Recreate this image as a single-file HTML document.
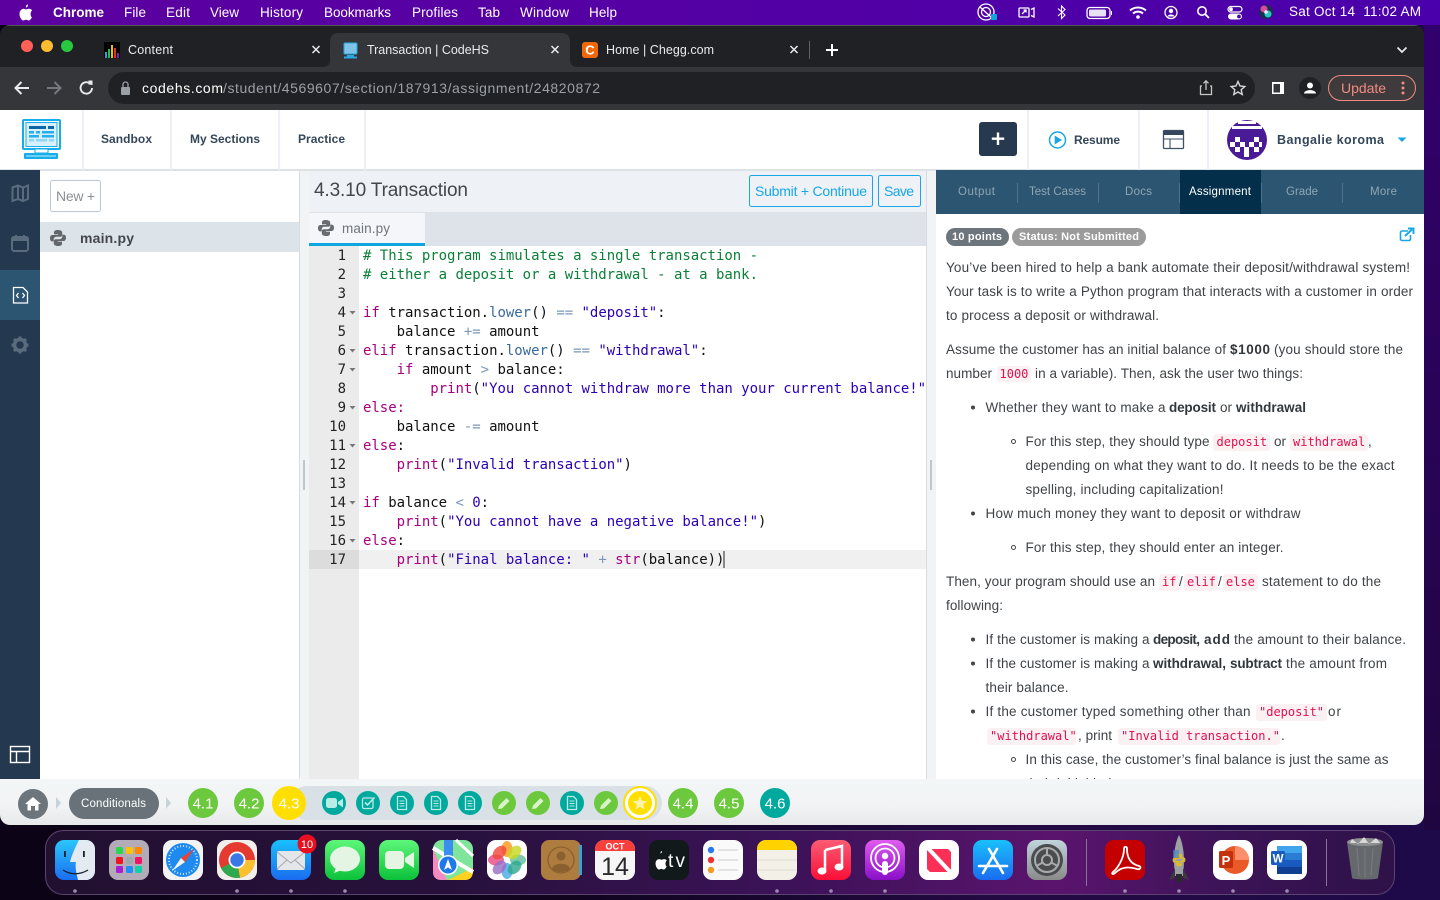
<!DOCTYPE html>
<html><head><meta charset="utf-8"><title>Transaction | CodeHS</title>
<style>
html,body{margin:0;padding:0;width:1440px;height:900px;overflow:hidden;background:#1a0535}
svg{display:block}
text{font-family:"Liberation Sans",sans-serif;white-space:pre}
.m{font-size:13.5px;fill:#fff}
.t{font-size:12.5px;fill:#e8eaed}
.n{font-size:12px;font-weight:700;fill:#34465a}
.p{font-size:13.5px;fill:#3f4347}
.pb{font-size:13.5px;fill:#33373b;font-weight:700}
.c{font-family:"DejaVu Sans Mono","Liberation Mono",monospace;font-size:12px;fill:#e0104f}
.co{font-family:"DejaVu Sans Mono","Liberation Mono",monospace;font-size:14px;fill:#111;letter-spacing:-.025px}
.ln{font-family:"DejaVu Sans Mono","Liberation Mono",monospace;font-size:14px;fill:#222;text-anchor:end}
.k{fill:#a8007f}.g{fill:#0b7f38}.s{fill:#2b00b5}.f{fill:#3a6a9c}.o{fill:#7d98b3}
.rt{font-size:11.5px;fill:#8fa6b5}
.sec{font-size:15px;fill:#fff;text-anchor:middle;font-weight:400}
.bx{fill:#fbf1f3}
</style></head><body>
<svg width="1440" height="900" viewBox="0 0 1440 900" xmlns="http://www.w3.org/2000/svg">
<defs>
<linearGradient id="menu" x1="0" x2="1" y1="0" y2="0"><stop offset="0" stop-color="#5c00a0"/><stop offset="1" stop-color="#4a00aa"/></linearGradient>
<linearGradient id="side" x1="0" x2="0" y1="0" y2="1"><stop offset="0" stop-color="#33006e"/><stop offset="1" stop-color="#200640"/></linearGradient>
<linearGradient id="wall" x1="0" x2="1" y1="0" y2="0"><stop offset="0" stop-color="#0c0316"/><stop offset=".4" stop-color="#10041f"/><stop offset=".7" stop-color="#240a44"/><stop offset="1" stop-color="#1e0a48"/></linearGradient>
<linearGradient id="dock" x1="0" x2="1" y1="0" y2="0"><stop offset="0" stop-color="#221030"/><stop offset=".3" stop-color="#27113c"/><stop offset=".55" stop-color="#3c1258"/><stop offset=".75" stop-color="#5a146e"/><stop offset=".88" stop-color="#3b1356"/><stop offset="1" stop-color="#2e1248"/></linearGradient>
<linearGradient id="bar" x1="0" x2="0" y1="0" y2="1"><stop offset="0" stop-color="#f3f6f7"/><stop offset=".6" stop-color="#f1f3f4"/><stop offset="1" stop-color="#e6e8e9"/></linearGradient>
<linearGradient id="finder" x1="0" x2="0" y1="0" y2="1"><stop offset="0" stop-color="#2cc6fb"/><stop offset="1" stop-color="#1a6ef0"/></linearGradient>
<linearGradient id="blue" x1="0" x2="0" y1="0" y2="1"><stop offset="0" stop-color="#19c0fb"/><stop offset="1" stop-color="#1a6cf0"/></linearGradient>
<linearGradient id="green" x1="0" x2="0" y1="0" y2="1"><stop offset="0" stop-color="#5df77a"/><stop offset="1" stop-color="#0cc13a"/></linearGradient>
<linearGradient id="red" x1="0" x2="0" y1="0" y2="1"><stop offset="0" stop-color="#fb5c74"/><stop offset="1" stop-color="#fa0f37"/></linearGradient>
<linearGradient id="pod" x1="0" x2="0" y1="0" y2="1"><stop offset="0" stop-color="#e05cf0"/><stop offset="1" stop-color="#8a10c8"/></linearGradient>
<linearGradient id="gear" x1="0" x2="0" y1="0" y2="1"><stop offset="0" stop-color="#c0d4dc"/><stop offset="1" stop-color="#8a8a8a"/></linearGradient>
<clipPath id="win"><rect x="0" y="25" width="1424" height="800" rx="10"/></clipPath>
<clipPath id="code"><rect x="359" y="246" width="567" height="533"/></clipPath>
<clipPath id="panel"><rect x="936" y="214" width="488" height="565"/></clipPath>
<g id="py"><path d="M-.3-8C-3.500-8-4-6.700-4-5.500V-3.600H.2V-3H-5.700C-7.200-3-8-1.600-8 .2S-7.200 3.400-5.700 3.400H-4.300V1.500C-4.300 0-3 -1.200-1.600-1.200H2.500C3.500-1.200 4.200-2 4.200-3V-5.500C4.200-6.800 2.800-8-.3-8Z"/><path d="M.3 8C3.500 8 4 6.700 4 5.500V3.600H-.2V3H5.700C7.200 3 8 1.600 8-.2S7.200-3.400 5.700-3.400H4.300V-1.500C4.300 0 3 1.200 1.600 1.200H-2.500C-3.500 1.200-4.200 2-4.200 3V5.500C-4.200 6.800-2.800 8 .3 8Z"/></g>
<g id="doc"><path d="M-4.500-6.500H1.500L4.500-3.500V6.500H-4.500Z" fill="none" stroke="#b8ece6" stroke-width="1.300"/><path d="M-2.500-2H2.500M-2.500 .5H2.500M-2.500 3H2.500" stroke="#b8ece6" stroke-width="1.100"/></g>
<g id="pen"><path d="M-6 6L-5 2.500L2.500-5L5.500-2L-2 5.500Z" fill="#d9f3c9"/></g>
</defs>

<!-- wallpaper -->
<rect width="1440" height="900" fill="url(#wall)"/>
<rect x="1424" y="0" width="16" height="830" fill="url(#side)"/>
<rect width="1440" height="25" fill="url(#menu)"/>

<!-- menu bar -->
<g transform="translate(26 12) scale(1.300) translate(-25 -12.500)"><path d="M26.300 6.500C25.300 7 24.800 8 24.900 9C25.900 9 26.800 8 26.300 6.500ZM29.500 16.500C29.100 17.600 28 19 27 19C26.200 19 25.800 18.500 25 18.500S23.700 19 23 19C21.700 19 20 16.500 20 14C20 11.500 21.700 10 23.200 10C24 10 24.700 10.500 25.200 10.500S26.500 10 27.400 10C28.300 10 29.200 10.500 29.700 11.300C28.200 12.300 28.200 15.500 29.500 16.500Z" fill="#fff"/></g>
<text x="53" y="17" class="m" font-weight="700" textLength="51">Chrome</text>
<text x="124" y="17" class="m" textLength="22">File</text>
<text x="166" y="17" class="m" textLength="24">Edit</text>
<text x="210" y="17" class="m" textLength="29">View</text>
<text x="260" y="17" class="m" textLength="43">History</text>
<text x="324" y="17" class="m" textLength="67">Bookmarks</text>
<text x="412" y="17" class="m" textLength="46">Profiles</text>
<text x="478" y="17" class="m" textLength="22">Tab</text>
<text x="520" y="17" class="m" textLength="49">Window</text>
<text x="589" y="17" class="m" textLength="28">Help</text>
<!-- status icons -->
<g fill="none" stroke="#fff" stroke-width="1.300">
<circle cx="986" cy="12" r="8"/><circle cx="986" cy="12" r="4.500"/><path d="M980 7L992 18"/>
<rect x="1019" y="8" width="10" height="9" rx="1"/><path d="M1022 14L1026 10M1023.500 10H1026V12.500M1031 9.500L1034 8V17L1031 15.500"/>
<path d="M1058 8.500L1065 15L1061.500 18.500V6L1065 9.500L1058 16" stroke-width="1.100"/>
<rect x="1087" y="7.500" width="23" height="11" rx="3"/>
<circle cx="1171" cy="12.500" r="6"/>
<circle cx="1202" cy="11" r="4.200" stroke-width="1.600"/><path d="M1205 14L1209 18" stroke-width="1.800"/>
</g>
<rect x="1089" y="9.500" width="17" height="7" rx="1.500" fill="#e8e0f4"/>
<path d="M1111.500 11V15" stroke="#fff" stroke-width="1"/>
<path d="M1130 10.500C1134.500 6.500 1141.500 6.500 1146 10.500M1133 13.500C1136 11 1140 11 1143 13.500" fill="none" stroke="#fff" stroke-width="2"/><circle cx="1138" cy="17" r="1.800" fill="#fff"/>
<circle cx="1171" cy="11" r="2.200" fill="#fff"/><path d="M1167.500 16.500C1168 13.800 1174 13.800 1174.500 16.500Z" fill="#fff"/>
<rect x="1228" y="6.500" width="14" height="5.500" rx="2.700" fill="none" stroke="#fff" stroke-width="1.200"/><circle cx="1231" cy="9.200" r="1.900" fill="#fff"/>
<rect x="1228" y="13.500" width="14" height="6" rx="3" fill="#fff"/><circle cx="1239" cy="16.500" r="1.900" fill="#4a00aa"/>
<rect x="991" y="14" width="6" height="6" rx="1" fill="#0fa6d8"/>
<circle cx="1266" cy="12" r="7" fill="#16304e"/><circle cx="1264" cy="9" r="3.500" fill="#d84b9c"/><circle cx="1268" cy="14" r="3.500" fill="#27c6c0"/><circle cx="1266" cy="12" r="1.800" fill="#e8e8ff"/>
<text x="1289" y="16" class="m" textLength="132">Sat Oct 14  11:02 AM</text>

<!-- window -->
<g clip-path="url(#win)">
<rect y="25" width="1424" height="42" fill="#202124"/>
<rect y="25" width="1424" height="1" fill="#55565a"/>
<rect y="67" width="1424" height="43" fill="#35363a"/>
<!-- tabs -->
<circle cx="27" cy="46" r="6" fill="#ff5f57"/><circle cx="47" cy="46" r="6" fill="#febc2e"/><circle cx="67" cy="46" r="6" fill="#28c840"/>
<rect x="104" y="42" width="16" height="16" fill="#000"/>
<rect x="105" y="52" width="2" height="6" fill="#1fa2e8"/><rect x="108" y="49" width="2" height="9" fill="#20c040"/><rect x="111" y="45" width="2" height="13" fill="#f0c010"/><rect x="114" y="48" width="2" height="10" fill="#e03030"/><rect x="117" y="53" width="2" height="5" fill="#8020c0"/>
<text x="128" y="54" class="t" textLength="45">Content</text>
<path d="M312.500 46L319.500 53M319.500 46L312.500 53" stroke="#e8eaed" stroke-width="1.500"/>
<path d="M322 67C328 67 330 64 330 60V42C330 36 333 33 339 33H561C567 33 570 36 570 42V60C570 64 572 67 578 67Z" fill="#35363a"/>
<rect x="344" y="43" width="13" height="11" rx="1" fill="#7fc4e8" stroke="#2aa8e0"/><rect x="347" y="55" width="7" height="1.500" fill="#2aa8e0"/><rect x="344" y="56.500" width="13" height="2" fill="#2aa8e0"/>
<text x="367" y="54" class="t" textLength="122">Transaction | CodeHS</text>
<path d="M551.500 46L558.500 53M558.500 46L551.500 53" stroke="#e8eaed" stroke-width="1.500"/>
<rect x="582" y="42" width="16" height="16" rx="3" fill="#f0680a"/>
<text x="590" y="54.500" font-size="13" font-weight="700" fill="#fff" text-anchor="middle">C</text>
<text x="606" y="54" class="t" textLength="108">Home | Chegg.com</text>
<path d="M790.500 46L797.500 53M797.500 46L790.500 53" stroke="#e8eaed" stroke-width="1.500"/>
<rect x="809" y="41" width="1" height="18" fill="#5f6368"/>
<path d="M832 44V56M826 50H838" stroke="#fff" stroke-width="2"/>
<path d="M1397.500 47.500L1402 52L1406.500 47.500" fill="none" stroke="#e8eaed" stroke-width="1.700"/>
<!-- toolbar -->
<rect x="108" y="72" width="1147" height="32" rx="16" fill="#202124"/>
<path d="M29 88H16M21.500 82L15.500 88L21.500 94" fill="none" stroke="#e8eaed" stroke-width="2"/>
<path d="M47 88H60M54.500 82L60.500 88L54.500 94" fill="none" stroke="#74777b" stroke-width="2"/>
<path d="M92 88A5.700 5.700 0 1 1 90 83.600" fill="none" stroke="#e8eaed" stroke-width="1.900"/><path d="M88.500 80.500H92.500V85L88.500 84.500Z" fill="#e8eaed"/>
<rect x="121" y="87" width="9" height="8" rx="1" fill="#9aa0a6"/><path d="M123 87V84.500A2.500 2.500 0 0 1 128 84.500V87" fill="none" stroke="#9aa0a6" stroke-width="1.300"/>
<text x="142" y="93" font-size="14" fill="#fff" textLength="81">codehs.com</text>
<text x="223" y="93" font-size="14" fill="#9aa0a6" textLength="377">/student/4569607/section/187913/assignment/24820872</text>
<path d="M1202 86H1200.500V94.500H1211.500V86H1210M1206 90V81M1203.500 83.300L1206 80.800L1208.500 83.300" fill="none" stroke="#c4c7c5" stroke-width="1.300"/>
<path d="M1238 81.500L1240 86L1244.800 86.500L1241.200 89.700L1242.200 94.500L1238 92L1233.800 94.500L1234.800 89.700L1231.200 86.500L1236 86Z" fill="none" stroke="#d5d7d9" stroke-width="1.400"/>
<rect x="1272" y="82" width="12" height="12" fill="#fff"/><rect x="1273.500" y="84" width="6.500" height="8.500" fill="#35363a"/>
<circle cx="1310" cy="88" r="11" fill="#202124"/><circle cx="1310" cy="85.500" r="3" fill="#fff"/><path d="M1304 93.500C1304 89 1316 89 1316 93.500Z" fill="#fff"/>
<rect x="1328.500" y="75.500" width="87" height="25" rx="12.500" fill="#3f3a3c" stroke="#f28b82"/>
<text x="1341" y="93" font-size="14" fill="#f28b82" textLength="45">Update</text>
<circle cx="1403" cy="83" r="1.500" fill="#f28b82"/><circle cx="1403" cy="88" r="1.500" fill="#f28b82"/><circle cx="1403" cy="93" r="1.500" fill="#f28b82"/>

<!-- app header -->
<rect y="110" width="1424" height="60" fill="#fff"/>
<rect y="169" width="1424" height="2" fill="#dfe2e5"/>
<g fill="#edf1f5"><rect x="82" y="110" width="2" height="60"/><rect x="170" y="110" width="2" height="60"/><rect x="278" y="110" width="2" height="60"/><rect x="364" y="110" width="2" height="60"/><rect x="1027" y="110" width="2" height="60"/><rect x="1138" y="110" width="2" height="60"/><rect x="1207" y="110" width="2" height="60"/></g>
<!-- logo -->
<rect x="23" y="120" width="37" height="29" rx="1" fill="#fff" stroke="#16aeea" stroke-width="2"/>
<rect x="26" y="122.500" width="31" height="24" fill="#d8f0fb" stroke="#16aeea"/>
<rect x="29" y="126" width="17" height="3" fill="#0a68a8"/><rect x="48" y="126" width="6" height="3" fill="#0a68a8"/>
<g fill="#25aef0"><rect x="29" y="131" width="5" height="2.500"/><rect x="36" y="131" width="4" height="2.500"/><rect x="42" y="131" width="12" height="2.500"/><rect x="29" y="135" width="10" height="2.500"/><rect x="42" y="135" width="12" height="2.500"/></g>
<g fill="#8fd6f7"><rect x="29" y="139" width="5" height="2.500"/><rect x="36" y="139" width="11" height="2.500"/><rect x="49" y="139" width="5" height="2.500"/></g>
<rect x="35" y="149" width="13" height="4" fill="#fff" stroke="#16aeea"/>
<rect x="24" y="153" width="34" height="6" rx="1" fill="#16aeea"/><rect x="26" y="155.500" width="30" height="1" fill="#c4ecff"/>
<text x="101" y="143" class="n" textLength="51">Sandbox</text>
<text x="190" y="143" class="n" textLength="70">My Sections</text>
<text x="298" y="143" class="n" textLength="47">Practice</text>
<rect x="979" y="122" width="38" height="34" rx="3" fill="#26394f"/>
<path d="M998 132.500V145M991.800 138.700H1004.200" stroke="#fff" stroke-width="2.400"/>
<circle cx="1057.500" cy="140" r="8" fill="none" stroke="#17a7e6" stroke-width="1.500"/><path d="M1054.700 135.500L1062 140L1054.700 144.500Z" fill="#17a7e6"/>
<text x="1074" y="144" class="n" textLength="46">Resume</text>
<rect x="1163.500" y="130.500" width="20" height="18" rx="1" fill="#fff" stroke="#3d5268" stroke-width="1.300"/><rect x="1163.500" y="130.500" width="20" height="4.500" fill="#33465c"/><path d="M1163.500 139H1183.500M1170 139V148.500" stroke="#3d5268" stroke-width="1.100" fill="none"/>
<circle cx="1247" cy="140" r="20" fill="#4a1b96"/>
<rect x="1238" y="121" width="18" height="3" fill="#fff"/>
<rect x="1232" y="126" width="30" height="3" fill="#fff"/>
<g fill="#fff"><rect x="1230" y="142" width="5" height="5"/><rect x="1235" y="137" width="5" height="5"/><rect x="1240" y="142" width="5" height="5"/><rect x="1249" y="142" width="5" height="5"/><rect x="1254" y="137" width="5" height="5"/><rect x="1259" y="142" width="3" height="5"/><rect x="1235" y="147" width="5" height="5"/><rect x="1244" y="147" width="5" height="5"/><rect x="1254" y="147" width="5" height="5"/><rect x="1244" y="152" width="5" height="5"/></g>
<text x="1277" y="144" font-size="12.500" font-weight="700" fill="#34465a" textLength="107">Bangalie koroma</text>
<path d="M1397.500 137.500H1406.500L1402 142Z" fill="#17a7e6"/>

<!-- left sidebar -->
<rect y="170" width="40" height="609" fill="#24384f"/>
<rect y="270" width="40" height="50" fill="#2b5570"/>
<path d="M12.500 187.500L18 185.500L23 187.500L28 185.500V199L23 201L18 199L12.500 201ZM18 185.500V199M23 187.500V201" fill="none" stroke="#5a6b7d" stroke-width="2"/>
<rect x="12" y="237" width="16" height="14" rx="2" fill="none" stroke="#5a6b7d" stroke-width="2"/><rect x="12" y="237" width="16" height="4" fill="#5a6b7d"/><path d="M16 235V238M24 235V238" stroke="#5a6b7d" stroke-width="2"/>
<path d="M13.500 287.500H23L27.500 292V303H13.500Z" fill="none" stroke="#fff" stroke-width="1.300"/>
<path d="M18.500 293L16.500 295.500L18.500 298M22.500 293L24.500 295.500L22.500 298" fill="none" stroke="#fff" stroke-width="1.300"/>
<circle cx="20" cy="345" r="5.500" fill="none" stroke="#5a6b7d" stroke-width="3.500"/>
<path d="M20 336.500V339M20 351V353.500M11.500 345H14M26 345H28.500M14 339L15.800 340.800M24.200 349.200L26 351M26 339L24.200 340.800M15.800 349.200L14 351" stroke="#5a6b7d" stroke-width="3"/>
<rect x="10.500" y="746.500" width="19" height="16" fill="none" stroke="#fff" stroke-width="1.400"/><path d="M10.500 751.500H29.500M16.500 751.500V762.500" stroke="#fff" stroke-width="1.400"/>

<!-- file panel -->
<rect x="40" y="171" width="259" height="608" fill="#fff"/>
<rect x="50.500" y="180.500" width="50" height="31" rx="2" fill="#fff" stroke="#bcc9d4"/>
<text x="56" y="201" font-size="14" fill="#8a8f94" textLength="39">New +</text>
<rect x="40" y="222" width="259" height="30" fill="#dde4e9"/>
<use href="#py" x="58" y="238" fill="#63676b"/>
<text x="80" y="243" font-size="14" font-weight="700" fill="#43474b" textLength="54">main.py</text>
<!-- dividers -->
<rect x="299" y="171" width="10" height="608" fill="#f1f3f5"/><rect x="299" y="171" width="1" height="608" fill="#d8dce0"/>
<rect x="303" y="460" width="2" height="30" fill="#bfc6cc"/>
<rect x="926" y="171" width="10" height="608" fill="#f1f3f5"/><rect x="926" y="171" width="1" height="608" fill="#d8dce0"/>
<rect x="930" y="460" width="2" height="30" fill="#bfc6cc"/>

<!-- editor -->
<rect x="309" y="171" width="617" height="42" fill="#eef1f5"/>
<text x="314" y="196" font-size="19" fill="#43474b" textLength="154">4.3.10 Transaction</text>
<rect x="749.500" y="175.500" width="123" height="31" rx="2" fill="none" stroke="#17a7e6"/>
<text x="755" y="196" font-size="14" fill="#17a7e6" textLength="112">Submit + Continue</text>
<rect x="878.500" y="175.500" width="42" height="31" rx="2" fill="none" stroke="#17a7e6"/>
<text x="884" y="196" font-size="14" fill="#17a7e6" textLength="30">Save</text>
<rect x="309" y="212" width="617" height="1" fill="#dfe3e7"/>
<rect x="309" y="213" width="617" height="33" fill="#dde3e9"/>
<rect x="309" y="213" width="116" height="30" fill="#f4f6fa"/><rect x="309" y="243" width="116" height="3" fill="#0ea5e0"/>
<use href="#py" x="326" y="228" fill="#686c70"/>
<text x="342" y="233" font-size="13.500" fill="#70757a" textLength="48">main.py</text>
<rect x="309" y="246" width="50" height="533" fill="#ebebeb"/>
<rect x="359" y="246" width="567" height="533" fill="#fff"/>
<rect x="309" y="550" width="50" height="19" fill="#dcdcdc"/>
<rect x="359" y="550" width="567" height="19" fill="#f0f0f0"/>
<g>
<text x="346" y="260" class="ln">1</text><text x="346" y="279" class="ln">2</text><text x="346" y="298" class="ln">3</text><text x="346" y="317" class="ln">4</text><text x="346" y="336" class="ln">5</text><text x="346" y="355" class="ln">6</text><text x="346" y="374" class="ln">7</text><text x="346" y="393" class="ln">8</text><text x="346" y="412" class="ln">9</text><text x="346" y="431" class="ln">10</text><text x="346" y="450" class="ln">11</text><text x="346" y="469" class="ln">12</text><text x="346" y="488" class="ln">13</text><text x="346" y="507" class="ln">14</text><text x="346" y="526" class="ln">15</text><text x="346" y="545" class="ln">16</text><text x="346" y="564" class="ln">17</text>
</g>
<g fill="#777"><path d="M349.500 311L355.500 311L352.500 314.500Z"/><path d="M349.500 349L355.500 349L352.500 352.500Z"/><path d="M349.500 368L355.500 368L352.500 371.500Z"/><path d="M349.500 406L355.500 406L352.500 409.500Z"/><path d="M349.500 444L355.500 444L352.500 447.500Z"/><path d="M349.500 501L355.500 501L352.500 504.500Z"/><path d="M349.500 539L355.500 539L352.500 542.500Z"/></g>
<g clip-path="url(#code)">
<text x="363" y="260" class="co g" xml:space="preserve"># This program simulates a single transaction -</text>
<text x="363" y="279" class="co g" xml:space="preserve"># either a deposit or a withdrawal - at a bank.</text>
<text x="363" y="317" class="co" xml:space="preserve"><tspan class="k">if</tspan> transaction.<tspan class="f">lower</tspan>() <tspan class="o">==</tspan> <tspan class="s">"deposit"</tspan>:</text>
<text x="363" y="336" class="co" xml:space="preserve">    balance <tspan class="o">+=</tspan> amount</text>
<text x="363" y="355" class="co" xml:space="preserve"><tspan class="k">elif</tspan> transaction.<tspan class="f">lower</tspan>() <tspan class="o">==</tspan> <tspan class="s">"withdrawal"</tspan>:</text>
<text x="363" y="374" class="co" xml:space="preserve">    <tspan class="k">if</tspan> amount <tspan class="o">&gt;</tspan> balance:</text>
<text x="363" y="393" class="co" xml:space="preserve">        <tspan class="k">print</tspan>(<tspan class="s">"You cannot withdraw more than your current balance!"</tspan>)</text>
<text x="363" y="412" class="co k" xml:space="preserve">else:</text>
<text x="363" y="431" class="co" xml:space="preserve">    balance <tspan class="o">-=</tspan> amount</text>
<text x="363" y="450" class="co" xml:space="preserve"><tspan class="k">else</tspan>:</text>
<text x="363" y="469" class="co" xml:space="preserve">    <tspan class="k">print</tspan>(<tspan class="s">"Invalid transaction"</tspan>)</text>
<text x="363" y="507" class="co" xml:space="preserve"><tspan class="k">if</tspan> balance <tspan class="o">&lt;</tspan> <tspan class="s">0</tspan>:</text>
<text x="363" y="526" class="co" xml:space="preserve">    <tspan class="k">print</tspan>(<tspan class="s">"You cannot have a negative balance!"</tspan>)</text>
<text x="363" y="545" class="co" xml:space="preserve"><tspan class="k">else</tspan>:</text>
<text x="363" y="564" class="co" xml:space="preserve">    <tspan class="k">print</tspan>(<tspan class="s">"Final balance: "</tspan> <tspan class="o">+</tspan> <tspan class="k">str</tspan>(balance))</text>
<rect x="723.500" y="551" width="1" height="17" fill="#222"/>
</g>

<!-- right panel -->
<rect x="936" y="171" width="488" height="608" fill="#fff"/>
<rect x="936" y="170" width="488" height="44" fill="#2b5570"/>
<rect x="1180" y="170" width="81" height="44" fill="#042f4b"/>
<g fill="#4f7389"><rect x="1017" y="183" width="1" height="20"/><rect x="1098" y="183" width="1" height="20"/><rect x="1179" y="183" width="1" height="20"/><rect x="1261" y="183" width="1" height="20"/><rect x="1342" y="183" width="1" height="20"/></g>
<text x="958" y="195" class="rt" textLength="37">Output</text>
<text x="1029" y="195" class="rt" textLength="57">Test Cases</text>
<text x="1125" y="195" class="rt" textLength="27">Docs</text>
<text x="1189" y="195" class="rt" style="fill:#fff" textLength="62">Assignment</text>
<text x="1286" y="195" class="rt" textLength="32">Grade</text>
<text x="1370" y="195" class="rt" textLength="27">More</text>
<rect x="946" y="228" width="63" height="18" rx="9" fill="#6b757b"/>
<rect x="1012" y="228" width="134" height="18" rx="9" fill="#9b9b9b"/>
<text x="952" y="240" font-size="11" font-weight="700" fill="#fff" textLength="50">10 points</text>
<text x="1019" y="240" font-size="11" font-weight="700" fill="#fff" textLength="120">Status: Not Submitted</text>
<path d="M1408 231H1402A1.500 1.500 0 0 0 1400.500 232.500V239A1.500 1.500 0 0 0 1402 240.500H1409A1.500 1.500 0 0 0 1410.500 239V235" fill="none" stroke="#17a7e6" stroke-width="1.600"/>
<path d="M1405 236L1412 229.500M1408 228.500H1413.500V234" fill="none" stroke="#17a7e6" stroke-width="1.900"/>

<g clip-path="url(#panel)">
<text x="946" y="272" class="p" textLength="464">You’ve been hired to help a bank automate their deposit/withdrawal system!</text>
<text x="946" y="296" class="p" textLength="467">Your task is to write a Python program that interacts with a customer in order</text>
<text x="946" y="320" class="p" textLength="213">to process a deposit or withdrawal.</text>
<text x="946" y="354" class="p" textLength="280">Assume the customer has an initial balance of</text>
<text x="1230" y="354" class="pb" textLength="40">$1000</text>
<text x="1274" y="354" class="p" textLength="129">(you should store the</text>
<text x="946" y="378" class="p" textLength="46">number</text>
<rect x="997" y="366" width="34" height="16" rx="3" class="bx"/><text x="999.500" y="378" class="c">1000</text>
<text x="1035" y="378" class="p" textLength="268">in a variable). Then, ask the user two things:</text>

<circle cx="973" cy="407.500" r="2" fill="#444"/>
<text x="985.500" y="412" class="p" textLength="180">Whether they want to make a</text>
<text x="1169" y="412" class="pb" textLength="47">deposit</text>
<text x="1220" y="412" class="p" textLength="12">or</text>
<text x="1236" y="412" class="pb" textLength="70">withdrawal</text>

<circle cx="1013.500" cy="441.500" r="2" fill="none" stroke="#444"/>
<text x="1025.500" y="446" class="p" textLength="184">For this step, they should type</text>
<rect x="1213" y="434" width="57" height="17" rx="3" class="bx"/><text x="1216.500" y="446" class="c">deposit</text>
<text x="1274" y="446" class="p" textLength="12">or</text>
<rect x="1290" y="434" width="78" height="17" rx="3" class="bx"/><text x="1293" y="446" class="c">withdrawal</text>
<text x="1368" y="446" class="p">,</text>
<text x="1025.500" y="470" class="p" textLength="369">depending on what they want to do. It needs to be the exact</text>
<text x="1025.500" y="494" class="p" textLength="198">spelling, including capitalization!</text>
<circle cx="973" cy="513.500" r="2" fill="#444"/>
<text x="985.500" y="518" class="p" textLength="315">How much money they want to deposit or withdraw</text>
<circle cx="1013.500" cy="547.500" r="2" fill="none" stroke="#444"/>
<text x="1025.500" y="552" class="p" textLength="258">For this step, they should enter an integer.</text>

<text x="946" y="586" class="p" textLength="209">Then, your program should use an</text>
<rect x="1159" y="574" width="21" height="17" rx="3" class="bx"/><text x="1162" y="586" class="c">if</text>
<text x="1179" y="586" class="p">/</text>
<rect x="1184" y="574" width="34" height="17" rx="3" class="bx"/><text x="1187" y="586" class="c">elif</text>
<text x="1218" y="586" class="p">/</text>
<rect x="1223" y="574" width="35" height="17" rx="3" class="bx"/><text x="1226" y="586" class="c">else</text>
<text x="1262" y="586" class="p" textLength="119">statement to do the</text>
<text x="946" y="610" class="p" textLength="57">following:</text>

<circle cx="973" cy="639.500" r="2" fill="#444"/>
<text x="985.500" y="644" class="p" textLength="164">If the customer is making a</text>
<text x="1153" y="644" class="pb" textLength="47">deposit,</text>
<text x="1204" y="644" class="pb" textLength="26">add</text>
<text x="1234" y="644" class="p" textLength="172">the amount to their balance.</text>
<circle cx="973" cy="663.500" r="2" fill="#444"/>
<text x="985.500" y="668" class="p" textLength="164">If the customer is making a</text>
<text x="1153" y="668" class="pb" textLength="73">withdrawal,</text>
<text x="1230" y="668" class="pb" textLength="52">subtract</text>
<text x="1286" y="668" class="p" textLength="101">the amount from</text>
<text x="985.500" y="692" class="p" textLength="83">their balance.</text>
<circle cx="973" cy="711.500" r="2" fill="#444"/>
<text x="985.500" y="716" class="p" textLength="265">If the customer typed something other than</text>
<rect x="1256" y="704" width="71" height="17" rx="3" class="bx"/><text x="1259" y="716" class="c">"deposit"</text>
<text x="1328" y="716" class="p" textLength="13">or</text>
<rect x="987" y="728" width="89" height="17" rx="3" class="bx"/><text x="990" y="740" class="c">"withdrawal"</text>
<text x="1078" y="740" class="p" textLength="34">, print</text>
<rect x="1118" y="728" width="162" height="17" rx="3" class="bx"/><text x="1121" y="740" class="c">"Invalid transaction."</text>
<text x="1281" y="740" class="p">.</text>
<circle cx="1013.500" cy="759.500" r="2" fill="none" stroke="#444"/>
<text x="1025.500" y="764" class="p" textLength="363">In this case, the customer’s final balance is just the same as</text>
<text x="1025.500" y="788" class="p" textLength="120">their initial balance.</text>
</g>

<!-- bottom bar -->
<rect y="779" width="1424" height="46" fill="url(#bar)"/>
<rect x="290" y="786" width="372" height="34" rx="17" fill="#d9e0e6"/>
<circle cx="33" cy="804" r="15" fill="#6b757b"/>
<path d="M25 804L33 797L41 804H38.500V810.500H35V806H31V810.500H27.500V804Z" fill="#fff"/>
<path d="M56 797L61 803L56 809Z" fill="#c7d2da"/>
<rect x="69" y="788" width="90" height="31" rx="15.500" fill="#687278"/>
<text x="81" y="807" font-size="11.500" fill="#fff" textLength="65">Conditionals</text>
<path d="M166 797L171 803L166 809Z" fill="#c7d2da"/>
<circle cx="203" cy="803" r="15" fill="#6cc83c"/><text x="203" y="808.500" class="sec">4.1</text>
<circle cx="249" cy="803" r="15" fill="#6cc83c"/><text x="249" y="808.500" class="sec">4.2</text>
<circle cx="289" cy="803" r="17" fill="#ffdf00"/><text x="289" y="808.500" class="sec">4.3</text>
<g fill="#00a99d"><circle cx="334" cy="803" r="12"/><circle cx="368" cy="803" r="12"/><circle cx="402" cy="803" r="12"/><circle cx="436" cy="803" r="12"/><circle cx="470" cy="803" r="12"/><circle cx="572" cy="803" r="12"/></g>
<g fill="#6cc83c"><circle cx="504" cy="803" r="12"/><circle cx="538" cy="803" r="12"/><circle cx="606" cy="803" r="12"/></g>
<rect x="326" y="798" width="11" height="10" rx="2.500" fill="#b8ece6"/><path d="M338 802L343 798.500V807.500L338 804Z" fill="#b8ece6"/>
<rect x="362.500" y="798" width="10.500" height="10.500" rx="1.500" fill="none" stroke="#b8ece6" stroke-width="1.300"/><path d="M365 802.500L367.500 805L374.500 797.500" fill="none" stroke="#b8ece6" stroke-width="1.600"/>
<use href="#doc" x="402" y="803"/><use href="#doc" x="436" y="803"/><use href="#doc" x="470" y="803"/><use href="#doc" x="572" y="803"/>
<use href="#pen" x="504" y="803"/><use href="#pen" x="538" y="803"/><use href="#pen" x="606" y="803"/>
<circle cx="640" cy="803" r="16" fill="#fff" stroke="#ffdf00" stroke-width="2"/><circle cx="640" cy="803" r="12" fill="#ffdf00"/>
<path d="M640 796L642 800.800L647.200 801.200L643.200 804.500L644.500 809.500L640 806.800L635.500 809.500L636.800 804.500L632.800 801.200L638 800.800Z" fill="#fff3a8"/>
<circle cx="683" cy="803" r="15" fill="#6cc83c"/><text x="683" y="808.500" class="sec">4.4</text>
<circle cx="729" cy="803" r="15" fill="#6cc83c"/><text x="729" y="808.500" class="sec">4.5</text>
<circle cx="775" cy="803" r="15" fill="#00a99d"/><text x="775" y="808.500" class="sec">4.6</text>
</g>

<!-- dock -->
<rect x="45.500" y="830.500" width="1349" height="64" rx="18" fill="url(#dock)" stroke="#5c4470"/>
<g fill="#a08bb0"><circle cx="75" cy="891" r="1.800"/><circle cx="237" cy="891" r="1.800"/><circle cx="291" cy="891" r="1.800"/><circle cx="345" cy="891" r="1.800"/><circle cx="777" cy="891" r="1.800"/><circle cx="831" cy="891" r="1.800"/><circle cx="885" cy="891" r="1.800"/><circle cx="1125" cy="891" r="1.800"/><circle cx="1179" cy="891" r="1.800"/><circle cx="1233" cy="891" r="1.800"/><circle cx="1287" cy="891" r="1.800"/></g>
<rect x="1086" y="839" width="1" height="47" fill="#8a6fa0"/><rect x="1326" y="839" width="1" height="47" fill="#8a6fa0"/>

<!-- finder -->
<rect x="55" y="840" width="40" height="40" rx="9" fill="url(#finder)"/>
<path d="M79 840H86C91 840 95 844 95 849V871C95 876 91 880 86 880H78C76 872 75 866 76 862H70C72 854 76 846 79 840Z" fill="#e4eaf2"/>
<path d="M63 870C70 875 80 875 88 870" fill="none" stroke="#18202e" stroke-width="1.300"/>
<rect x="64" y="851" width="1.800" height="6" fill="#18202e"/><rect x="83" y="851" width="1.800" height="6" fill="#18202e"/>
<!-- launchpad -->
<rect x="109" y="840" width="40" height="40" rx="9" fill="#b4abb8"/>
<g><rect x="116" y="847" width="7" height="7" rx="1.500" fill="#28d84a"/><rect x="126" y="847" width="7" height="7" rx="1.500" fill="#ffc107"/><rect x="135" y="847" width="7" height="7" rx="1.500" fill="#ff8a00"/><rect x="116" y="857" width="7" height="7" rx="1.500" fill="#f0141e"/><rect x="126" y="857" width="7" height="7" rx="1.500" fill="#a0a8ac"/><rect x="135" y="857" width="7" height="7" rx="1.500" fill="#f01464"/><rect x="116" y="866" width="7" height="7" rx="1.500" fill="#a81ed0"/><rect x="126" y="866" width="7" height="7" rx="1.500" fill="#2090f8"/><rect x="135" y="866" width="7" height="7" rx="1.500" fill="#14d0a8"/></g>
<!-- safari -->
<rect x="163" y="840" width="40" height="40" rx="9" fill="#f3f3f3"/>
<circle cx="183" cy="860" r="17" fill="#1e8af0"/><circle cx="183" cy="860" r="14" fill="none" stroke="#cfe6fb" stroke-width="2" stroke-dasharray="1 2"/>
<path d="M194 849L181 858L185 862Z" fill="#f0402c"/><path d="M172 871L181 858L185 862Z" fill="#f2f2f2"/>
<!-- chrome -->
<rect x="217" y="840" width="40" height="40" rx="9" fill="#f1efec"/>
<circle cx="237" cy="860" r="18" fill="#e53a30"/>
<path d="M237 860L221 868A18 18 0 0 0 240 877.800Z" fill="#2fa84f"/>
<path d="M237 860H255A18 18 0 0 1 240 877.800Z" fill="#fbc02d"/>
<circle cx="237" cy="860" r="8.500" fill="#fff"/><circle cx="237" cy="860" r="6.700" fill="#3b78e7"/>
<!-- mail -->
<rect x="271" y="840" width="40" height="40" rx="9" fill="url(#blue)"/>
<rect x="277" y="851" width="28" height="19" rx="2" fill="#e4e6ea"/><path d="M277 852L291 863L305 852M277 869L287 860M305 869L295 860" fill="none" stroke="#a4a8b0"/>
<circle cx="307" cy="844" r="9.500" fill="#e8101e"/><text x="307" y="848" font-size="11" fill="#fff" text-anchor="middle">10</text>
<!-- messages -->
<rect x="325" y="840" width="40" height="40" rx="9" fill="url(#green)"/>
<ellipse cx="345" cy="859" rx="15" ry="12.500" fill="#e4f5e4"/><path d="M336 868L334 873L342 870Z" fill="#e4f5e4"/>
<!-- facetime -->
<rect x="379" y="840" width="40" height="40" rx="9" fill="url(#green)"/>
<rect x="385" y="851" width="19" height="18" rx="4" fill="#e4f5e4"/><path d="M405 858L414 852V868L405 862Z" fill="#e4f5e4"/>
<!-- maps -->
<rect x="433" y="840" width="40" height="40" rx="9" fill="#7fe59a"/>
<path d="M433 849L447 880H441C436 880 433 877 433 872Z" fill="#f58bc0"/>
<path d="M448 880L473 868V871C473 877 470 880 465 880Z" fill="#ffd21f"/>
<path d="M433 848L473 872" stroke="#fff" stroke-width="4"/>
<path d="M456 840L473 856" stroke="#fff" stroke-width="3"/>
<path d="M444 840H453V858H444Z" fill="#3b8ef0"/>
<circle cx="448" cy="865" r="10" fill="#fff"/><circle cx="448" cy="865" r="8.500" fill="#1f78ec"/><path d="M448 859L452 870L448 867.500L444 870Z" fill="#fff"/>
<!-- photos -->
<rect x="487" y="840" width="40" height="40" rx="9" fill="#fff"/>
<g fill-opacity=".82"><ellipse cx="507" cy="849" rx="5.500" ry="8" fill="#fa9a1e"/><ellipse cx="507" cy="871" rx="5.500" ry="8" fill="#4aa8e8"/><ellipse cx="496" cy="860" rx="8" ry="5.500" fill="#e84a80"/><ellipse cx="518" cy="860" rx="8" ry="5.500" fill="#60c0a0"/><ellipse cx="499.500" cy="852.500" rx="5.500" ry="8" transform="rotate(45 499.500 852.500)" fill="#f04a3a"/><ellipse cx="514.500" cy="852.500" rx="5.500" ry="8" transform="rotate(-135 514.500 852.500)" fill="#c8d820"/><ellipse cx="499.500" cy="867.500" rx="5.500" ry="8" transform="rotate(-135 499.500 867.500)" fill="#9a70c8"/><ellipse cx="514.500" cy="867.500" rx="5.500" ry="8" transform="rotate(45 514.500 867.500)" fill="#30a890"/></g>
<!-- contacts -->
<rect x="541" y="840" width="40" height="40" rx="8" fill="#ae7c3e"/>
<rect x="579" y="845" width="3" height="30" fill="#3da0d0"/>
<circle cx="561" cy="860" r="13" fill="none" stroke="#8a6030" stroke-width="1.300"/><circle cx="561" cy="856" r="4.500" fill="#8a6030"/><path d="M552 869C553 862 569 862 570 869C566 873 556 873 552 869Z" fill="#8a6030"/>
<!-- calendar -->
<rect x="595" y="840" width="40" height="40" rx="9" fill="#f6f6f6"/>
<path d="M595 851V849C595 844 599 840 604 840H626C631 840 635 844 635 849V851Z" fill="#f73f3c"/>
<text x="615" y="849.500" font-size="9" font-weight="700" fill="#fff" text-anchor="middle">OCT</text>
<text x="615" y="875" font-size="25" fill="#2a2a2a" text-anchor="middle">14</text>
<!-- tv -->
<rect x="649" y="840" width="40" height="40" rx="9" fill="#12191b"/>
<g transform="translate(661 860) scale(1.300) translate(-660.500 -859)"><path d="M661 852C660.500 852.400 660 853.100 660.100 853.900C660.900 853.900 661.600 853 661 852ZM664.800 864C664.400 865 663.500 866.300 662.600 866.300C661.900 866.300 661.500 865.800 660.800 865.800S659.500 866.300 658.900 866.300C657.800 866.300 656.300 864 656.300 861.700C656.300 859.500 657.800 858.300 659.100 858.300C659.800 858.300 660.400 858.800 660.900 858.800S662.100 858.300 662.900 858.300C663.700 858.300 664.500 858.700 665 859.400C663.600 860.300 663.700 863.100 664.800 864Z" fill="#fff"/></g>
<text x="668" y="867" font-size="19" fill="#fff" textLength="17">tv</text>
<!-- reminders -->
<rect x="703" y="840" width="40" height="40" rx="9" fill="#fafafa"/>
<circle cx="711" cy="850" r="3.200" fill="#2a78f0"/><circle cx="711" cy="860" r="3.200" fill="#f03030"/><circle cx="711" cy="870" r="3.200" fill="#f59a20"/>
<path d="M718 850H738M718 860H738M718 870H738" stroke="#d5d5d5" stroke-width="1.300"/>
<!-- notes -->
<rect x="757" y="840" width="40" height="40" rx="9" fill="#f3f0e8"/>
<path d="M757 850V849C757 844 761 840 766 840H788C793 840 797 844 797 849V850Z" fill="#ffd200"/>
<path d="M757 860H797M757 870H797" stroke="#dedacf"/>
<!-- music -->
<rect x="811" y="840" width="40" height="40" rx="9" fill="url(#red)"/>
<path d="M825 850L842 846V867" fill="none" stroke="#fff" stroke-width="2.500"/><path d="M825 850V871" stroke="#fff" stroke-width="2.500"/><ellipse cx="822" cy="871" rx="4.500" ry="3.500" fill="#fff"/><ellipse cx="839" cy="867" rx="4.500" ry="3.500" fill="#fff"/>
<!-- podcasts -->
<rect x="865" y="840" width="40" height="40" rx="9" fill="url(#pod)"/>
<circle cx="885" cy="858" r="14" fill="none" stroke="#fff" stroke-width="1.800"/><circle cx="885" cy="858" r="9.500" fill="none" stroke="#fff" stroke-width="1.800"/><circle cx="885" cy="856" r="3.200" fill="#fff"/><rect x="882" y="861" width="6" height="14" rx="3" fill="#fff"/>
<!-- news -->
<rect x="919" y="840" width="40" height="40" rx="9" fill="#fff"/>
<path d="M927 849H948L951 852V872H930L927 869Z" fill="#fc2f56"/>
<path d="M926 846L953 875" stroke="#fff" stroke-width="4"/>
<!-- app store -->
<rect x="973" y="840" width="40" height="40" rx="9" fill="url(#blue)"/>
<path d="M983 873L997 849M1003 873L989 849M979 866H1007" stroke="#fff" stroke-width="2.600" fill="none" stroke-linecap="round"/>
<!-- settings -->
<rect x="1027" y="840" width="40" height="40" rx="9" fill="url(#gear)"/>
<circle cx="1047" cy="860" r="16" fill="#4a4c4e"/><circle cx="1047" cy="860" r="12" fill="none" stroke="#a8aaac" stroke-width="2"/><circle cx="1047" cy="860" r="5" fill="none" stroke="#a8aaac" stroke-width="2"/><path d="M1047 855V848M1042.700 862.500L1036.500 866M1051.300 862.500L1057.500 866" stroke="#a8aaac" stroke-width="2"/>
<!-- acrobat -->
<rect x="1105" y="840" width="40" height="40" rx="9" fill="#c40000"/>
<path d="M1113 872C1118 868 1124 858 1124 849C1124 846 1127 846 1127 849C1127 858 1131 864 1139 866C1142 867 1140 870 1137 869C1130 867 1122 866 1115 873C1113 875 1111 874 1113 872Z" fill="none" stroke="#fff" stroke-width="1.800"/>
<!-- idle rocket -->
<path d="M1179 835C1174 845 1173 860 1175 876H1183C1185 860 1184 845 1179 835Z" fill="#9aa0a4"/>
<path d="M1175 868L1169 880L1175 878ZM1183 868L1189 880L1183 878Z" fill="#3a3a3e"/><rect x="1176" y="874" width="6" height="8" fill="#2a2a2e"/>
<use href="#py" transform="translate(1179 860) scale(.8)" fill="#d8b83a"/>
<path d="M1173 850H1179V858H1173Z" fill="#4a88c0" opacity=".7"/>
<!-- powerpoint -->
<rect x="1213" y="840" width="40" height="40" rx="9" fill="#fff"/>
<circle cx="1235" cy="860" r="14" fill="#ea5a28"/><path d="M1235 846A14 14 0 0 1 1249 860H1235Z" fill="#ff8f6a"/>
<rect x="1219" y="851" width="14" height="17" rx="1.500" fill="#c4300c"/><text x="1226" y="865" font-size="13" font-weight="700" fill="#fff" text-anchor="middle">P</text>
<!-- word -->
<rect x="1267" y="840" width="40" height="40" rx="9" fill="#fff"/>
<rect x="1277" y="846" width="25" height="7" fill="#41a5ee"/><rect x="1277" y="853" width="25" height="7" fill="#2b7cd3"/><rect x="1277" y="860" width="25" height="7" fill="#185abd"/><rect x="1277" y="867" width="25" height="7" fill="#103f91"/>
<rect x="1271" y="851" width="14" height="14" rx="1.500" fill="#1a5dc0"/><text x="1278" y="862.500" font-size="11.500" font-weight="700" fill="#fff" text-anchor="middle">W</text>
<!-- trash -->
<path d="M1347 842H1383L1378 878C1378 880 1352 880 1352 878Z" fill="#65686c"/>
<ellipse cx="1365" cy="842" rx="18" ry="4" fill="#8c8e90"/>
<path d="M1352 839L1358 844L1364 837L1369 844L1376 838L1380 843H1350Z" fill="#d8d8d8"/>
<path d="M1357 848L1359 876M1365 848V877M1373 848L1371 876" stroke="#7a7c80" stroke-width="1"/>
</svg>
</body></html>
